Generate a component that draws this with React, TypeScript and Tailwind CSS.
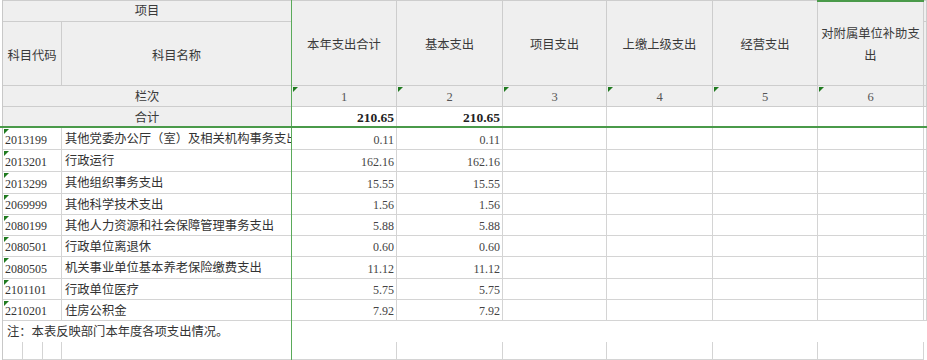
import React from "react";

const CJK = "font-['Liberation_Serif','Noto_Sans_CJK_SC',serif]";

const rows = [
  ["2013199", "其他党委办公厅（室）及相关机构事务支出", "0.11", "0.11"],
  ["2013201", "行政运行", "162.16", "162.16"],
  ["2013299", "其他组织事务支出", "15.55", "15.55"],
  ["2069999", "其他科学技术支出", "1.56", "1.56"],
  ["2080199", "其他人力资源和社会保障管理事务支出", "5.88", "5.88"],
  ["2080501", "行政单位离退休", "0.60", "0.60"],
  ["2080505", "机关事业单位基本养老保险缴费支出", "11.12", "11.12"],
  ["2101101", "行政单位医疗", "5.75", "5.75"],
  ["2210201", "住房公积金", "7.92", "7.92"],
];

const heads = ["本年支出合计", "基本支出", "项目支出", "上缴上级支出", "经营支出", "对附属单位补助支出"];

function Tri() {
  return (
    <span className="absolute left-[1px] top-[1px] h-0 w-0 border-t-[5px] border-r-[5px] border-t-[#1f7a1f] border-r-transparent" />
  );
}

const cell = "border-r border-b border-[#d4d4d4]";
const hcell = "border-r border-b border-[#cdcdcd] bg-[#efefef]";

export default function App() {
  return (
    <div className={`relative w-[927px] h-[360px] overflow-hidden bg-white text-[#333] ${CJK}`}>
      <div className="grid grid-cols-[3px_59px_230px_105px_106px_104px_106px_105px_106px_3px] grid-rows-[22px_64px_21px_21px_22px_22px_22px_21px_21px_21px_22px_21px_21px_21px_18px]">
        {/* left strip */}
        <div className="row-span-15 border-r border-[#c8c8c8] bg-white" />

        {/* header row 1 */}
        <div className={`${hcell} col-span-2 border-t flex items-center justify-center pt-[1px] text-[12.3px] text-[#3a3a3a]`}>
          项目
        </div>
        {heads.map((h) => (
          <div
            key={h}
            className={`${hcell} row-span-2 border-t flex items-center justify-center px-[2px] pt-[3px] text-center text-[12.3px] leading-[22px] text-[#3a3a3a]`}
          >
            {h}
          </div>
        ))}
        <div className={`${hcell} border-t`} />

        {/* header row 2 */}
        <div className={`${hcell} flex items-center justify-center pt-[6px] text-[12.3px] text-[#3a3a3a]`}>科目代码</div>
        <div className={`${hcell} flex items-center justify-center pt-[6px] text-[12.3px] text-[#3a3a3a]`}>科目名称</div>
        <div className={`${hcell}`} />

        {/* 栏次 row */}
        <div className={`${hcell} col-span-2 flex items-center justify-center pt-[3px] text-[12.3px] text-[#3a3a3a]`}>栏次</div>
        {[1, 2, 3, 4, 5, 6].map((n) => (
          <div
            key={n}
            className={`${hcell} relative flex items-center justify-center pt-[3px] font-['Liberation_Serif',serif] text-[12.5px] text-[#555]`}
          >
            <Tri />
            {n}
          </div>
        ))}
        <div className={`${hcell}`} />

        {/* 合计 row */}
        <div className={`${hcell} col-span-2 flex items-center justify-center pt-[3px] text-[12.3px] text-[#3a3a3a]`}>合计</div>
        <div className={`${cell} flex items-center justify-end pr-[2px] pt-[2px] font-['Liberation_Serif',serif] text-[13.5px] font-bold text-[#222]`}>
          210.65
        </div>
        <div className={`${cell} flex items-center justify-end pr-[2px] pt-[2px] font-['Liberation_Serif',serif] text-[13.5px] font-bold text-[#222]`}>
          210.65
        </div>
        <div className={cell} />
        <div className={cell} />
        <div className={cell} />
        <div className={cell} />
        <div className={cell} />

        {/* data rows */}
        {rows.map((r) => (
          <React.Fragment key={r[0]}>
            <div className={`${cell} relative flex items-center pl-[2px] pt-[2px] font-['Liberation_Serif',serif] text-[12px] text-[#333]`}>
              <Tri />
              {r[0]}
            </div>
            <div className={`${cell} flex items-center overflow-hidden whitespace-nowrap pl-[3px] pt-[2px] text-[12.3px] text-[#333]`}>
              {r[1]}
            </div>
            <div className={`${cell} flex items-center justify-end pr-[2px] pt-[2px] font-['Liberation_Serif',serif] text-[12px] text-[#444]`}>
              {r[2]}
            </div>
            <div className={`${cell} flex items-center justify-end pr-[2px] pt-[2px] font-['Liberation_Serif',serif] text-[12px] text-[#444]`}>
              {r[3]}
            </div>
            <div className={cell} />
            <div className={cell} />
            <div className={cell} />
            <div className={cell} />
            <div className={cell} />
          </React.Fragment>
        ))}

        {/* note row */}
        <div className="col-span-9 flex items-center pl-[4px] pt-[2px] text-[12.3px] text-[#333]">
          注：本表反映部门本年度各项支出情况。
        </div>

        {/* last partial row */}
        <div className="flex border-b border-[#d4d4d4]">
          <div className="w-[20px] border-r border-[#d4d4d4]" />
          <div className="w-[20px] border-r border-[#d4d4d4]" />
          <div className="flex-1 border-r border-[#d4d4d4]" />
        </div>
        <div className={cell} />
        <div className={cell} />
        <div className={cell} />
        <div className={cell} />
        <div className={cell} />
        <div className={cell} />
        <div className={cell} />
        <div />
      </div>

      {/* selection outline (green) overlaid on the sheet */}
      <div className="absolute left-[291px] top-0 h-[360px] w-px bg-[#5aaa5a]" />
      <div className="absolute left-0 top-[126px] h-[2px] w-[927px] bg-[#4a9a4a]" />
      <div className="absolute left-[817px] top-0 h-[2px] w-[107px] bg-[#4a9a4a]" />
    </div>
  );
}
